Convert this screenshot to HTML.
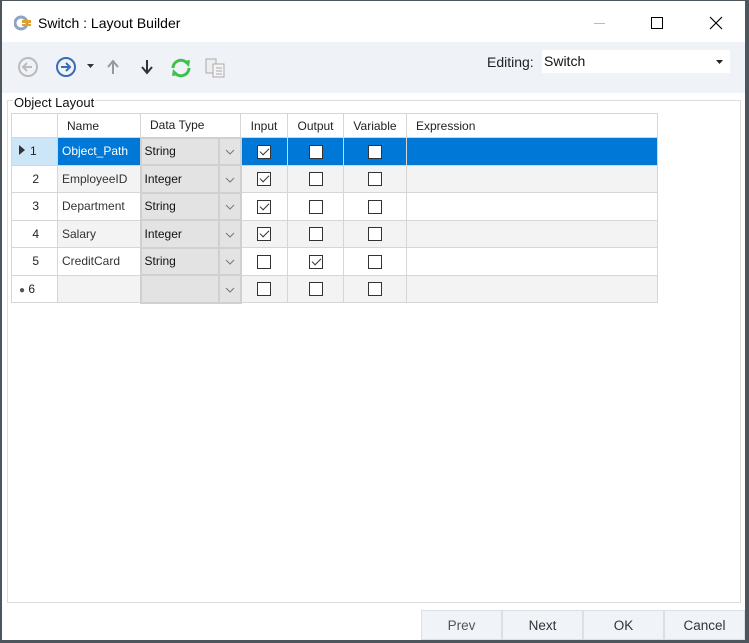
<!DOCTYPE html>
<html><head><meta charset="utf-8"><style>
*{margin:0;padding:0;box-sizing:border-box}
body{width:749px;height:643px;background:#4d565d;font-family:"Liberation Sans",sans-serif;position:relative;overflow:hidden}
#win{position:absolute;left:2px;top:1px;width:743px;height:639px;background:#fff}
.title{position:absolute;left:36px;top:14px;font-size:14px;color:#000}
.tb{position:absolute;left:0;top:41px;width:743px;height:51px;background:#eff3f8}
.grp{position:absolute;left:5px;top:99px;width:734px;height:503px;border:1px solid #dcdcdc}
.grpt{position:absolute;left:11px;top:94px;background:#fff;font-size:13px;padding:0 1px;color:#111}
table{position:absolute;left:9px;top:112px;border-collapse:collapse;table-layout:fixed;font-size:12px;color:#333}
td{border:1px solid #d6d6d6;height:27.5px;padding:0 4px;white-space:nowrap;overflow:hidden;vertical-align:middle}
tr.h td{height:24px;background:#fff;color:#222;font-size:12px}
tr.alt td{background:#f3f3f3}
tr.sel td{background:#0078d7;color:#fff}
td.rh{background:#fff!important;color:#222!important;text-align:left;padding-left:7px}
tr.sel td.rh{background:#cde6f7!important}
td.dt{background:#e3e3e3!important;color:#111!important;border:2px solid #d0d0d0;padding-left:3px}
td.ar{background:#e3e3e3!important;border:2px solid #d0d0d0;text-align:center;padding:0}
td.c{text-align:center}
.cb{display:inline-block;width:14px;height:14px;border:1px solid #333;background:#fff;vertical-align:middle;position:relative}
.cb.k::after{content:"";position:absolute;left:4px;top:0px;width:4px;height:8px;border:solid #333;border-width:0 1.3px 1.3px 0;transform:rotate(45deg)}
.btn{position:absolute;top:609px;height:30px;background:#f0f4f9;border:1px solid #dcdfe3;font-size:13.5px;color:#333;text-align:center;line-height:30px}
.tri{display:inline-block;width:0;height:0;border-left:6px solid #333;border-top:5px solid transparent;border-bottom:5px solid transparent;margin-right:5px}
</style></head><body>
<div id="win">
<svg style="position:absolute;left:12px;top:14px" width="18" height="16" viewBox="0 0 18 16"><circle cx="7" cy="8" r="6" fill="none" stroke="#8fa4c2" stroke-width="3"/><rect x="8" y="5" width="9" height="3" fill="#e0a030"/><rect x="8" y="9" width="9" height="2" fill="#e0a030"/></svg>
<div class="title">Switch : Layout Builder</div>
<div style="position:absolute;left:592px;top:22px;width:11px;height:1px;background:#bbb"></div>
<div style="position:absolute;left:649px;top:16px;width:12px;height:12px;border:1px solid #000"></div>
<svg style="position:absolute;left:707px;top:15px" width="14" height="14"><path d="M1 1L13 13M13 1L1 13" stroke="#000" stroke-width="1.2"/></svg>
<div class="tb">
<svg style="position:absolute;left:15px;top:14px" width="22" height="22"><circle cx="11" cy="11" r="9" fill="none" stroke="#bbb" stroke-width="2"/><path d="M15 11H7M10 7L6 11L10 15" fill="none" stroke="#bbb" stroke-width="2"/></svg>
<svg style="position:absolute;left:53px;top:14px" width="22" height="22"><circle cx="11" cy="11" r="9" fill="none" stroke="#3b6cb4" stroke-width="2"/><path d="M6 11H15M11 7L15 11L11 15" fill="none" stroke="#3b6cb4" stroke-width="2"/></svg>
<svg style="position:absolute;left:85px;top:22px" width="8" height="5"><path d="M0 0H7L3.5 4Z" fill="#333"/></svg>
<svg style="position:absolute;left:105px;top:17px" width="12" height="16"><path d="M6 15V3M1 8L6 2L11 8" fill="none" stroke="#999" stroke-width="2"/></svg>
<svg style="position:absolute;left:139px;top:17px" width="12" height="16"><path d="M6 1V13M1 8L6 14L11 8" fill="none" stroke="#333" stroke-width="2"/></svg>
<svg style="position:absolute;left:167px;top:14px" width="24" height="24"><path d="M4 12A8 8 0 0 1 18 7" fill="none" stroke="#3cc24a" stroke-width="3"/><path d="M20 12A8 8 0 0 1 6 17" fill="none" stroke="#3cc24a" stroke-width="3"/><path d="M14 5L21 4L20 11Z" fill="#3cc24a"/><path d="M10 19L3 20L4 13Z" fill="#3cc24a"/></svg>
<svg style="position:absolute;left:203px;top:15px" width="22" height="22"><rect x="1" y="2" width="10" height="14" fill="#eee" stroke="#aaa"/><rect x="8" y="7" width="11" height="13" fill="#f4f4f4" stroke="#aaa"/><path d="M11 11H17M11 14H17M11 17H17" stroke="#aaa"/></svg>
<div style="position:absolute;left:485px;top:12px;font-size:14px;color:#222">Editing:</div>
<div style="position:absolute;left:540px;top:8px;width:188px;height:23px;background:#fff;font-size:14px;color:#111;padding:3px 2px">Switch</div>
<svg style="position:absolute;left:714px;top:18px" width="8" height="5"><path d="M0 0H7L3.5 4Z" fill="#222"/></svg>
</div>
<div class="grp"></div>
<div class="grpt">Object Layout</div>
<table>
<colgroup><col style="width:46px"><col style="width:83px"><col style="width:78px"><col style="width:22px"><col style="width:47px"><col style="width:56px"><col style="width:63px"><col style="width:251px"></colgroup>
<tr class="h"><td></td><td style="padding-left:9px">Name</td><td colspan="2" style="padding-left:9px">Data Type</td><td class="c">Input</td><td class="c">Output</td><td class="c">Variable</td><td style="padding-left:9px">Expression</td></tr>
<tr class="sel"><td class="rh"><span class="tri"></span>1</td><td>Object_Path</td><td class="dt">String</td><td class="ar"><svg width="10" height="6"><path d="M1 1L5 5L9 1" fill="none" stroke="#777"/></svg></td><td class="c"><span class="cb k"></span></td><td class="c"><span class="cb"></span></td><td class="c"><span class="cb"></span></td><td></td></tr>
<tr class="alt"><td class="rh">&nbsp;&nbsp;&nbsp;&nbsp;2</td><td>EmployeeID</td><td class="dt">Integer</td><td class="ar"><svg width="10" height="6"><path d="M1 1L5 5L9 1" fill="none" stroke="#777"/></svg></td><td class="c"><span class="cb k"></span></td><td class="c"><span class="cb"></span></td><td class="c"><span class="cb"></span></td><td></td></tr>
<tr><td class="rh">&nbsp;&nbsp;&nbsp;&nbsp;3</td><td>Department</td><td class="dt">String</td><td class="ar"><svg width="10" height="6"><path d="M1 1L5 5L9 1" fill="none" stroke="#777"/></svg></td><td class="c"><span class="cb k"></span></td><td class="c"><span class="cb"></span></td><td class="c"><span class="cb"></span></td><td></td></tr>
<tr class="alt"><td class="rh">&nbsp;&nbsp;&nbsp;&nbsp;4</td><td>Salary</td><td class="dt">Integer</td><td class="ar"><svg width="10" height="6"><path d="M1 1L5 5L9 1" fill="none" stroke="#777"/></svg></td><td class="c"><span class="cb k"></span></td><td class="c"><span class="cb"></span></td><td class="c"><span class="cb"></span></td><td></td></tr>
<tr><td class="rh">&nbsp;&nbsp;&nbsp;&nbsp;5</td><td>CreditCard</td><td class="dt">String</td><td class="ar"><svg width="10" height="6"><path d="M1 1L5 5L9 1" fill="none" stroke="#777"/></svg></td><td class="c"><span class="cb"></span></td><td class="c"><span class="cb k"></span></td><td class="c"><span class="cb"></span></td><td></td></tr>
<tr class="alt"><td class="rh"><span style="font-size:10px;color:#555">&#9679;</span> 6</td><td></td><td class="dt"></td><td class="ar"><svg width="10" height="6"><path d="M1 1L5 5L9 1" fill="none" stroke="#777"/></svg></td><td class="c"><span class="cb"></span></td><td class="c"><span class="cb"></span></td><td class="c"><span class="cb"></span></td><td></td></tr>
</table>
<div class="btn" style="left:419px;width:81px;color:#555">Prev</div>
<div class="btn" style="left:500px;width:81px">Next</div>
<div class="btn" style="left:581px;width:81px">OK</div>
<div class="btn" style="left:662px;width:81px">Cancel</div>
</div>
</body></html>
